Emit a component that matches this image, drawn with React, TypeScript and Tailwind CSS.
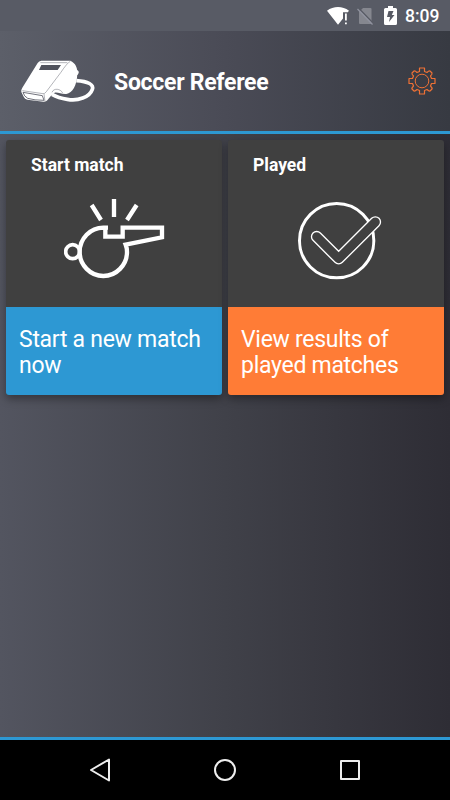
function WifiIcon() {
  return (
    <svg className="h-5 w-[22px]" viewBox="0 0 22 20" fill="#fff">
      <path d="M0 4.700C6.500-.2 15.500-.2 22 4.700L20.800 6.200H16V12.500L11 18.800Z" />
      <path d="M18 7.500h1.800v7H18zM18 16.500h1.800v1.800H18z" />
    </svg>
  )
}

function NoSimIcon() {
  return (
    <svg className="h-[18px] w-4" viewBox="0 0 16 18">
      <path d="M6 1h7.500q1 0 1 1v14q0 1-1 1H3q-1 0-1-1V5Z" fill="#85878f" />
      <path d="M1.500 1 16 16" stroke="#585b65" strokeWidth="1.300" />
      <path d="M.5 2 15.500 17.500" stroke="#9193a0" strokeWidth="1.200" />
    </svg>
  )
}

function BatteryIcon() {
  return (
    <svg className="h-[19px] w-[13px]" viewBox="0 0 13 19">
      <path d="M4 0h5v2h2.500q1.500 0 1.500 1.500v14q0 1.500-1.500 1.500h-10Q0 19 0 17.500v-14Q0 2 1.500 2H4Z" fill="#fff" />
      <path d="M4.500 5h5L7.800 9h2.700L5 16l1-5H3Z" fill="#565963" />
    </svg>
  )
}

function Logo() {
  return (
    <svg className="mt-px h-11 w-[76px]" viewBox="0 0 228 132" fill="none">
      <path d="M169 62C205 64 222 74 217 88C209 112 173 124 142 118C123 115 110 111 96 103" stroke="#fff" strokeWidth="11" />
      <path d="M168 29q10 2 8 10-2 6-8 8" fill="#fff" />
      <path
        d="M64 2H151C166 8 174 25 172 42C170 77 158 99 139 102C124 103 114 96 104 98C94 103 89 113 82 121Q78 126 70 125L22 119Q14 117 11 110L4 96Q2 91 7 83L53 9Q57 3 64 2Z"
        fill="#fff"
      />
      <path d="M7 92 69 101Q74 102 79 95L122 38Q142 8 151 4M61 8H142M72 102 75 124M96 97C101 83 122 86 128 99" stroke="#686b74" strokeWidth="1.500" />
      <path d="M64 15H123L113 30H57Z" fill="#50525c" />
      <path d="M9 97 67 107 72 121Q43 121 23 115 12 109 9 97Z" stroke="#555761" strokeWidth="2.500" />
    </svg>
  )
}

function GearIcon() {
  return (
    <svg className="h-7 w-7" viewBox="0 0 28 28" fill="none" stroke="#ef7135" strokeWidth="1.200" strokeLinejoin="round">
      <path d="M11.500 1H16.500V4.500L19 5.500Q21 3.500 22 4L24 6Q24.500 7 22.500 9L23.500 11.500H27V16.500H23.500L22.500 19Q24.500 21 24 22L22 24Q21 24.500 19 22.500L16.500 23.500V27H11.500V23.500L9 22.500Q7 24.500 6 24L4 22Q3.500 21 5.500 19L4.500 16.500H1V11.500H4.500L5.500 9Q3.500 7 4 6L6 4Q7 3.500 9 5.500L11.500 4.500Z" />
      <circle cx="14" cy="14" r="6.800" strokeWidth="1" />
    </svg>
  )
}

function WhistleIcon() {
  return (
    <svg className="h-20 w-[102px]" viewBox="0 0 306 240" fill="none" stroke="#fff" strokeWidth="13">
      <path d="M83 18 111 63M150 0V54M218 18 189 63" />
      <path d="M132 86H118C79 86 47 119 47 159C47 198 79 231 118 231C157 231 189 198 189 159Q189 147 185 137L294 115V86H176V113H124V86" />
      <circle cx="26" cy="158" r="21" strokeWidth="11" />
    </svg>
  )
}

function CheckIcon() {
  return (
    <svg className="h-[78px] w-[84px]" viewBox="0 0 252 234" fill="none" stroke="#fff">
      <circle cx="116" cy="116" r="111.500" strokeWidth="9" />
      <path
        d="M67 93 122 148 221 49A15.500 15.500 0 0 1 243 71L133 181A15.500 15.500 0 0 1 111 181L45 115A15.500 15.500 0 0 1 67 93Z"
        fill="#404040"
        strokeWidth="4"
      />
    </svg>
  )
}

function StatusBar() {
  return (
    <div className="flex h-[31px] shrink-0 items-center justify-end bg-[#585b65] pr-[10px]">
      <WifiIcon />
      <div className="ml-2"><NoSimIcon /></div>
      <div className="ml-[11px]"><BatteryIcon /></div>
      <span className="ml-2 w-[35px] whitespace-nowrap pt-0.5 text-[17.5px] font-medium text-white">8:09</span>
    </div>
  )
}

function Card({ title, text, color, children }: { title: string; text: string; color: string; children: React.ReactNode }) {
  return (
    <div className="flex h-[255px] w-[216px] flex-col overflow-hidden rounded-[3px] bg-[#404040] shadow-[0_4px_8px_rgba(0,0,0,0.35)]">
      <h2 className="pl-[25px] pt-[13px] text-[17.5px] font-bold leading-[25px] text-white">{title}</h2>
      <div className="flex-1">{children}</div>
      <div className={`h-[88px] whitespace-pre-line pl-[13px] pt-5 text-[23px] leading-[26px] tracking-[-0.28px] text-white ${color}`}>{text}</div>
    </div>
  )
}

export default function App() {
  return (
    <div className="flex h-[800px] w-[450px] flex-col overflow-hidden bg-black font-['Roboto',sans-serif]">
      <StatusBar />
      <header className="flex h-[103px] shrink-0 items-center border-b-[3px] border-[#2d98d3] bg-linear-to-r from-[#5c5f69] via-[#4a4b56] to-[#373a42] pl-5 pr-[14px]">
        <Logo />
        <h1 className="ml-[18px] flex-1 pt-1 text-[23px] font-bold tracking-[-0.28px] text-white">Soccer Referee</h1>
        <GearIcon />
      </header>
      <main className="flex flex-1 items-start gap-1.5 border-b-[3px] border-[#2d98d3] bg-linear-to-r from-[#535560] via-[#404149] to-[#2e2d35] px-1.5 pt-1.5">
        <Card title="Start match" text={"Start a new match\nnow"} color="bg-[#2d98d3]">
          <div className="pl-[58px] pt-[21px]"><WhistleIcon /></div>
        </Card>
        <Card title="Played" text={"View results of\nplayed matches"} color="bg-[#ff7c36]">
          <div className="pl-[70px] pt-6"><CheckIcon /></div>
        </Card>
      </main>
      <nav className="flex h-[60px] shrink-0 items-center justify-between pl-[89px] pr-[89px]">
        <svg className="h-6 w-[22px]" viewBox="0 0 22 24" fill="none" stroke="#eee" strokeWidth="2" strokeLinejoin="round">
          <path d="M2 12 20 1.500V22.500Z" />
        </svg>
        <svg className="h-6 w-6" viewBox="0 0 24 24" fill="none" stroke="#eee" strokeWidth="2">
          <circle cx="12" cy="12" r="10" />
        </svg>
        <svg className="h-[22px] w-[22px]" viewBox="0 0 22 22" fill="none" stroke="#eee" strokeWidth="2" strokeLinejoin="round">
          <path d="M2 2H20V20H2Z" />
        </svg>
      </nav>
    </div>
  )
}
